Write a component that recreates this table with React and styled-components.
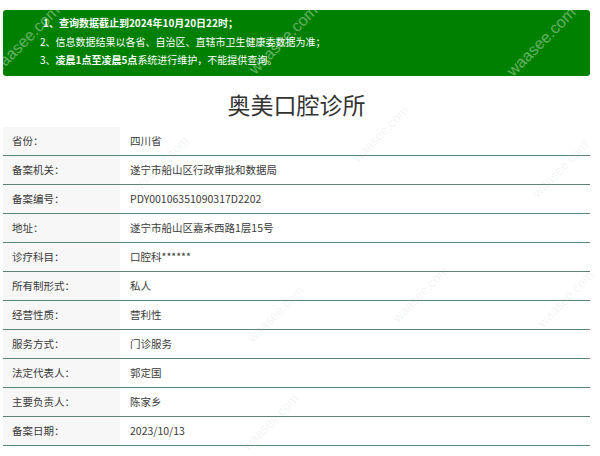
import React from 'react';
import styled, {createGlobalStyle} from 'styled-components';

const GlobalStyle = createGlobalStyle`
  html, body {
    margin: 0;
    background: #fff;
    font-family: "Noto Sans CJK SC", "Noto Sans", sans-serif;
  }
`;

const Page = styled.div`
  position: relative;
  width: 600px;
  height: 456px;
  overflow: hidden;
  padding: 10px 10px 0 3px;
  box-sizing: border-box;
`;

const Notice = styled.div`
  background: #008000;
  border-radius: 3px;
  padding: 4px 0 6px 37px;
  color: #fff;
  font-size: 10px;
  line-height: 18.5px;
`;

const NoticeLine = styled.div`
  font-weight: ${p => (p.bold ? 700 : 400)};
  padding-left: ${p => (p.indent ? '3px' : '0')};
  white-space: nowrap;
`;

const Title = styled.h1`
  margin: 12px 0 7px;
  text-align: center;
  font-size: 23px;
  font-weight: 400;
  line-height: 32px;
  color: #333;
`;

const Table = styled.div`
  display: flex;
  flex-direction: column;
`;

const Row = styled.div`
  display: grid;
  grid-template-columns: 117px 1fr;
  height: 29px;
  box-sizing: border-box;
  border-bottom: 1.5px solid #5f8675;
  font-size: 10.5px;
  color: #3a3a3a;
`;

const Label = styled.div`
  background: #f7f7f7;
  display: flex;
  align-items: center;
  padding-left: 9px;
`;

const Value = styled.div`
  display: flex;
  align-items: center;
  padding-left: 10px;
`;

const Mark = styled.span`
  position: absolute;
  transform: rotate(-45deg);
  transform-origin: left bottom;
  font-family: "Liberation Sans", Arial, sans-serif;
  font-size: ${p => p.size || 16}px;
  color: ${p => (p.light ? 'rgba(255,255,255,0.4)' : 'rgba(120,140,130,0.1)')};
  white-space: nowrap;
  pointer-events: none;
`;

const rows = [
  ['省份：', '四川省'],
  ['备案机关：', '遂宁市船山区行政审批和数据局'],
  ['备案编号：', 'PDY00106351090317D2202'],
  ['地址：', '遂宁市船山区嘉禾西路1层15号'],
  ['诊疗科目：', '口腔科******'],
  ['所有制形式：', '私人'],
  ['经营性质：', '营利性'],
  ['服务方式：', '门诊服务'],
  ['法定代表人：', '郭定国'],
  ['主要负责人：', '陈家乡'],
  ['备案日期：', '2023/10/13'],
];

const marks = [
  {x: 0, y: 80, light: true},
  {x: 258, y: 80, light: true},
  {x: 516, y: 82, light: true},
  {x: 140, y: 200, size: 13},
  {x: 360, y: 170, size: 13},
  {x: 540, y: 205, size: 13},
  {x: 255, y: 350, size: 13},
  {x: 400, y: 330, size: 13},
  {x: 545, y: 335, size: 13},
  {x: 250, y: 458, size: 13},
];

const App = () => (
  <>
    <GlobalStyle/>
    <Page>
      <Notice>
        <NoticeLine bold indent>1、查询数据截止到2024年10月20日22时；</NoticeLine>
        <NoticeLine>2、信息数据结果以各省、自治区、直辖市卫生健康委数据为准；</NoticeLine>
        <NoticeLine>3、<b>凌晨1点至凌晨5点</b>系统进行维护，不能提供查询。</NoticeLine>
      </Notice>
      <Title>奥美口腔诊所</Title>
      <Table>
        {rows.map(([label, value]) => (
          <Row key={label}>
            <Label>{label}</Label>
            <Value>{value}</Value>
          </Row>
        ))}
      </Table>
      {marks.map((m, i) => (
        <Mark key={i} light={m.light} size={m.size} style={{left: m.x, top: m.y - 20}}>
          waasee.com
        </Mark>
      ))}
    </Page>
  </>
);

export default App;
